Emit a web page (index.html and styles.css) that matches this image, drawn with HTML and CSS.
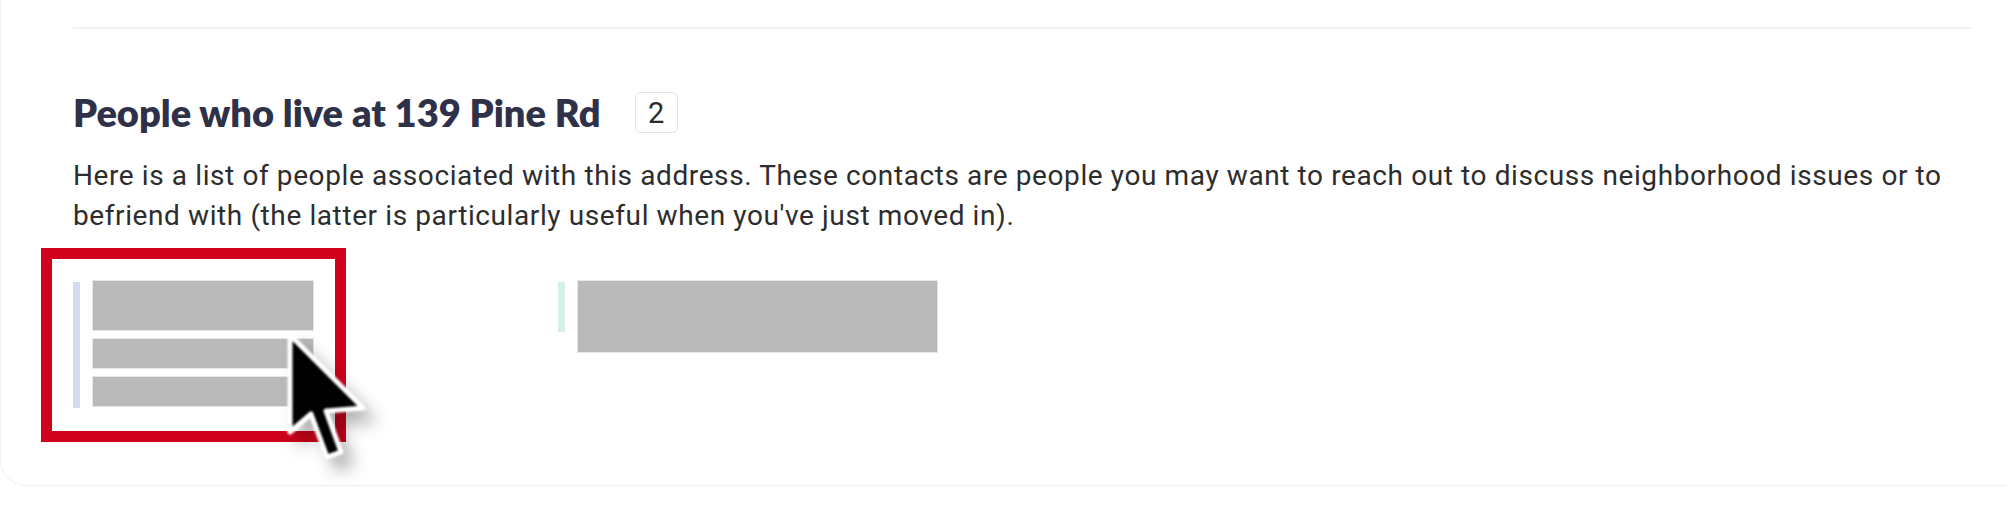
FILE: index.html
```html
<!DOCTYPE html>
<html lang="en">
<head>
    <meta charset="UTF-8">
    <meta name="viewport" content="width=device-width, initial-scale=1.0">
    <title>139 Pine Rd</title>
    <link rel="stylesheet" href="styles.css">
</head>
<body>
    <div class="card">
        <div class="divider"></div>
        <section class="people">
            <div class="people-head">
                <h2>People who live at 139 Pine Rd</h2>
                <span class="count">2</span>
            </div>
            <p class="intro">Here is a list of people associated with this address. These contacts are people you may want to reach out to discuss neighborhood issues or to befriend with (the latter is particularly useful when you've just moved in).</p>
            <div class="people-list">
                <div class="person person-selected">
                    <span class="person-bar bar-blue"></span>
                    <div class="person-lines">
                        <span class="line line-name"></span>
                        <span class="line line-short"></span>
                        <span class="line line-short"></span>
                    </div>
                </div>
                <div class="person">
                    <span class="person-bar bar-green"></span>
                    <div class="person-lines">
                        <span class="line line-wide"></span>
                    </div>
                </div>
                <!-- pointer resting on the selected contact -->
                <svg class="pointer" width="96" height="146" viewBox="-10 -10 96 146">
                    <path d="M0 0 L0 97 L21 79 L37 122 L51 117 L36 76 L73 73 Z" fill="#000" stroke="#fff" stroke-width="5" stroke-linejoin="round"/>
                </svg>
            </div>
        </section>
    </div>
</body>
</html>
```

FILE: styles.css
```css
body {
    margin: 0;
    background-color: #fff;
    font-family: Roboto, 'Liberation Sans', sans-serif;
    overflow: hidden;
}
.card {
    width: 2044px;
    box-sizing: border-box;
    margin-top: -40px;
    padding: 0 72px 77px;
    background-color: #fff;
    border: 1px solid #efefef;
    border-radius: 0 0 26px 26px;
}
.divider {
    height: 2px;
    margin-top: 66px;
    background-color: #f2f2f2;
}
.people-head {
    display: flex;
    align-items: center;
    gap: 34px;
    margin-top: 63px;
}
.people-head h2 {
    margin: 0;
    font-family: Lato, sans-serif;
    font-weight: 800;
    font-size: 38px;
    line-height: 41px;
    color: #2f3149;
}
.count {
    display: flex;
    flex-shrink: 0;
    align-items: center;
    justify-content: center;
    width: 43px;
    height: 41px;
    box-sizing: border-box;
    border: 1px solid #e4e4e4;
    border-radius: 6px;
    font-size: 29px;
    color: #2a2a2a;
}
.intro {
    margin: 23px 0 0;
    font-size: 28px;
    letter-spacing: 0.6px;
    line-height: 40px;
    color: #2d2d2d;
}
.people-list {
    position: relative;
    display: grid;
    grid-template-columns: 485px 485px;
    align-items: start;
    justify-items: start;
    margin-top: 44px;
}
.person {
    position: relative;
    display: flex;
    align-items: flex-start;
    gap: 12px;
}
.person-selected::after {
    content: "";
    position: absolute;
    top: -32px;
    left: -32px;
    right: -32px;
    bottom: -34px;
    border: 11px solid #d0021b;
}
.person-bar {
    width: 7px;
    margin-top: 2px;
}
.bar-blue {
    height: 126px;
    background-color: #d5daee;
}
.bar-green {
    height: 50px;
    background-color: #d5f1e3;
}
.person-lines {
    display: flex;
    flex-direction: column;
    gap: 7px;
}
.line {
    display: block;
    box-sizing: border-box;
    background-color: #bababa;
    border: 1px solid #e6e6e6;
}
.line-name {
    width: 222px;
    height: 51px;
}
.line-short {
    width: 222px;
    height: 31px;
}
.line-wide {
    width: 361px;
    height: 73px;
}
.pointer {
    position: absolute;
    left: 207px;
    top: 45px;
    filter: blur(1.2px) drop-shadow(10px 12px 8px rgba(0, 0, 0, 0.3));
}
```
